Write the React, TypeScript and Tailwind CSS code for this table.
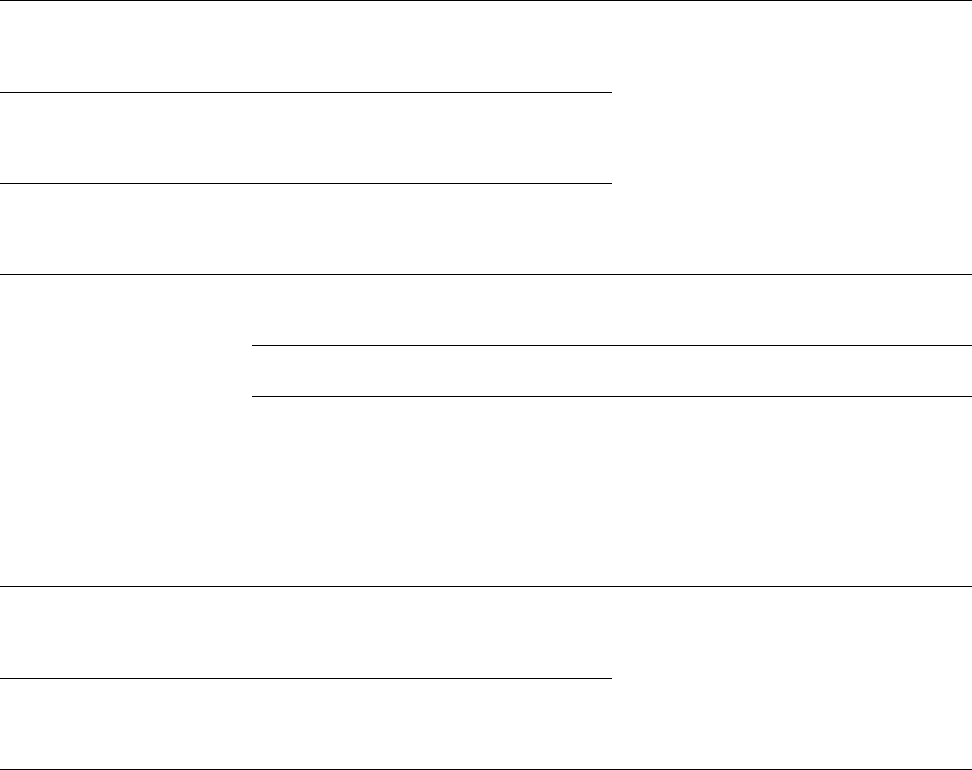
import React from "react";

const Row: React.FC<{ h: string; line?: boolean }> = ({ h, line }) => (
  <div className={`${h} ${line ? "border-b border-black" : ""}`} />
);

const App: React.FC = () => {
  return (
    <div className="w-full bg-white border-t border-black">
      {/* block 1 */}
      <div className="flex border-b border-black">
        <div className="w-[612px] flex flex-col">
          <div className="h-[92px] border-b border-black" />
          <div className="h-[91px] border-b border-black" />
          <Row h="h-[90px]" />
        </div>
        <div className="flex-1" />
      </div>

      {/* block 2 */}
      <div className="flex border-b border-black">
        <div className="w-[252px]" />
        <div className="flex-1 flex flex-col">
          <div className="h-[71px] border-b border-black" />
          <div className="h-[51px] border-b border-black" />
          <Row h="h-[189px]" />
        </div>
      </div>

      {/* block 3 */}
      <div className="flex border-b border-black">
        <div className="w-[612px] flex flex-col">
          <div className="h-[92px] border-b border-black" />
          <Row h="h-[90px]" />
        </div>
        <div className="flex-1" />
      </div>
    </div>
  );
};

export default App;
